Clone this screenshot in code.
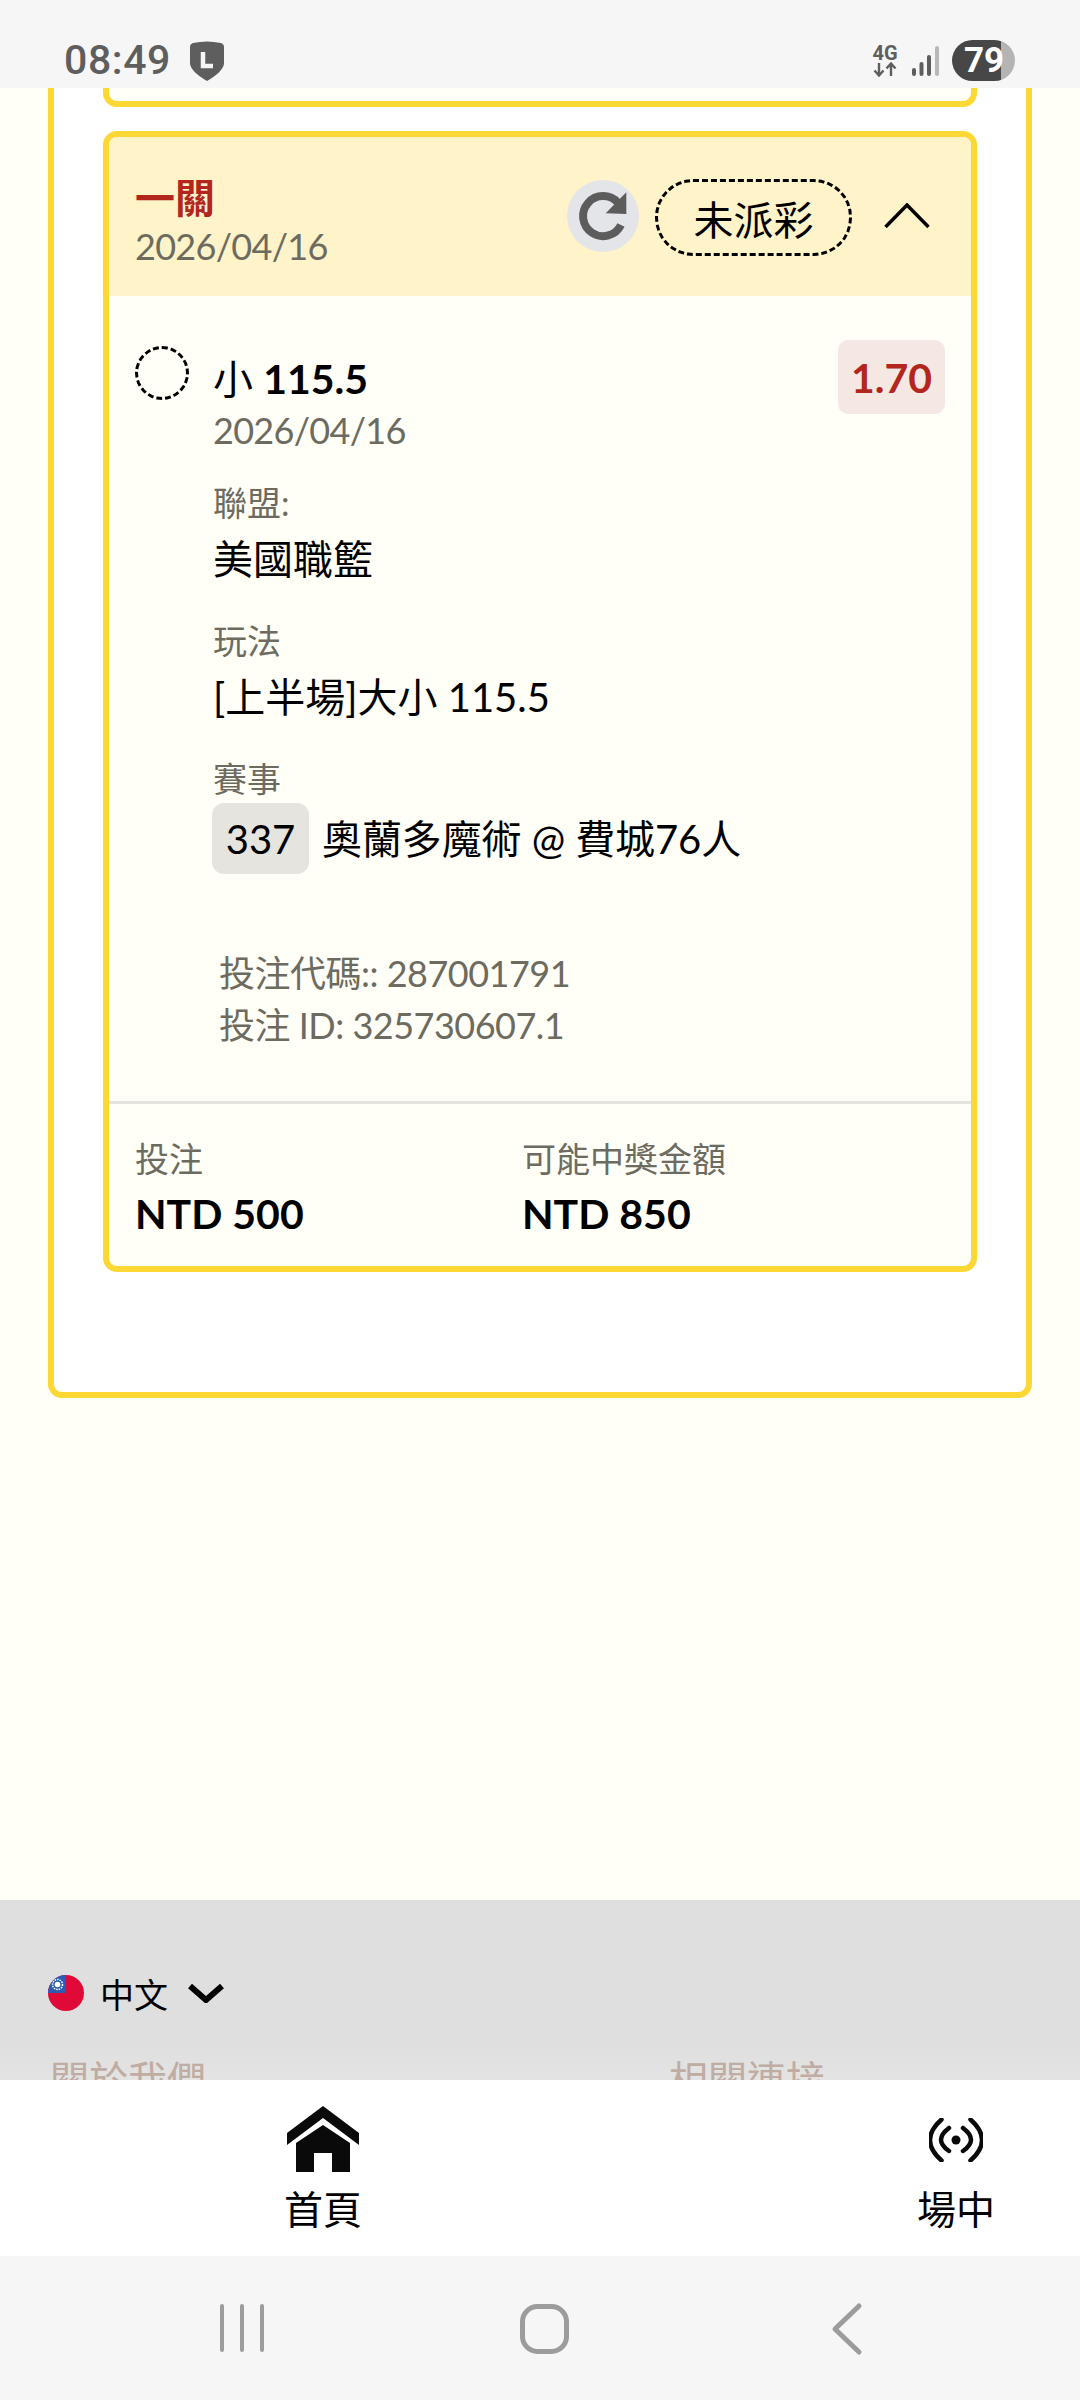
<div class="phone">
  <header class="status">
    <span class="time">08:49</span>
    <svg class="shield" viewBox="0 0 34 40"><path d="M3 2 Q17 -1 31 2 Q34 3 34 6 V22 Q34 30 17 40 Q0 30 0 22 V6 Q0 3 3 2Z" fill="#5e5e5e"/><path d="M13 11 V25 H23" fill="none" stroke="#f5f5f5" stroke-width="4.5"/></svg>
    <span class="spacer"></span>
    <div class="net">
      <span class="g4">4G</span>
      <svg viewBox="0 0 26 15" class="arrows"><path d="M7 1V13M2.5 8.5L7 13.5L11.500 8.500M19 14V2M14.500 6.500L19 1.500L23.500 6.500" fill="none" stroke="#5e5e5e" stroke-width="2.400"/></svg>
    </div>
    <svg class="signal" viewBox="0 0 28 30"><g stroke-width="4" stroke-linecap="round"><path d="M2 24V28M9.500 18V28M17 11V28" stroke="#5e5e5e"/><path d="M25 2V28" stroke="#b8b8b8"/></g></svg>
    <div class="battery"><span class="level">79</span></div>
  </header>

  <main class="page">
    <section class="ticket">
      <div class="prev"></div>
      <article class="bet">
        <div class="bet-head">
          <div class="head-text">
            <div class="title">一關</div>
            <div class="date">2026/04/16</div>
          </div>
          <div class="refresh">
            <svg viewBox="0 0 72 72"><path d="M51 22.800A20 20 0 1 0 54 45" fill="none" stroke="#5c5c5c" stroke-width="8"/><path d="M59.300 12.300V34L38.700 33.300Z" fill="#5c5c5c"/></svg>
          </div>
          <div class="state">未派彩</div>
          <svg class="chev" viewBox="0 0 46 25"><path d="M1.500 24L23 2L44.500 24" fill="none" stroke="#000" stroke-width="3.500"/></svg>
        </div>

        <div class="bet-body">
          <div class="pick">
            <span class="ring"></span>
            <div class="pick-main">
              <div class="pick-name">小 <b>115.5</b></div>
              <div class="date">2026/04/16</div>
            </div>
            <span class="odds">1.70</span>
          </div>
          <dl class="facts">
            <dt>聯盟:</dt>
            <dd>美國職籃</dd>
            <dt>玩法</dt>
            <dd>[上半場]大小 115.5</dd>
            <dt>賽事</dt>
            <dd class="match"><span class="chip">337</span><span>奧蘭多魔術 @ 費城76人</span></dd>
          </dl>
          <div class="ids">
            <div>投注代碼:: 287001791</div>
            <div>投注 ID: 325730607.1</div>
          </div>
        </div>

        <div class="totals">
          <div class="col">
            <div class="lbl">投注</div>
            <div class="amt">NTD 500</div>
          </div>
          <div class="col">
            <div class="lbl">可能中獎金額</div>
            <div class="amt">NTD 850</div>
          </div>
        </div>
      </article>
    </section>
  </main>

  <footer class="foot">
    <div class="lang">
      <svg class="flag" viewBox="0 0 36 36"><defs><clipPath id="fc"><circle cx="18" cy="18" r="18"/></clipPath></defs><g clip-path="url(#fc)"><rect width="36" height="36" fill="#df0a37"/><rect width="18" height="18" fill="#2b5bb5"/><circle cx="9.500" cy="9.500" r="5" fill="none" stroke="#fff" stroke-width="1.500" stroke-dasharray="1.500 1"/><circle cx="9.500" cy="9.500" r="2.800" fill="#fff"/></g></svg>
      <span class="lang-name">中文</span>
      <svg class="lang-chev" viewBox="0 0 36 20"><path d="M2 3L18 17L34 3" fill="none" stroke="#000" stroke-width="6"/></svg>
    </div>
    <div class="foot-links">
      <span>關於我們</span>
      <span>相關連接</span>
    </div>
  </footer>

  <nav class="tabs">
    <div class="tab home">
      <svg class="home-ic" viewBox="0 0 72 66"><path d="M36 0L72 27V39L36 12L0 39V27Z" fill="#0a0a0a"/><path d="M36 19L63 37V66H45V47H27V66H9V37Z" fill="#0a0a0a"/></svg>
      <span>首頁</span>
    </div>
    <div class="tab live">
      <svg class="live-ic" viewBox="0 0 54 44"><circle cx="27" cy="22" r="4.500" fill="#0a0a0a"/><g fill="none" stroke="#0a0a0a" stroke-width="4.500" stroke-linecap="round"><path d="M20 10Q4 22 20 33M34 10Q50 22 34 33M12.500 1.500Q-10.500 22 12.500 42.500M41.500 1.500Q64.500 22 41.500 42.500"/></g></svg>
      <span>場中</span>
    </div>
  </nav>

  <div class="sysnav">
    <svg class="sys" viewBox="0 0 1080 144"><g fill="none" stroke="#9c9c9c"><path d="M222 50V94M242 50V94M262 50V94" stroke-width="4" stroke-linecap="round"/><rect x="522.500" y="50.500" width="44" height="45" rx="15" stroke-width="5"/><path d="M859 50L835 73L859 96" stroke-width="5" stroke-linecap="round" stroke-linejoin="round"/></g></svg>
  </div>
</div>

<style>
  :global(body) { margin: 0; }
  .phone {
    width: 1080px;
    height: 2400px;
    display: flex;
    flex-direction: column;
    overflow: hidden;
    font-family: Lato, "Noto Sans CJK TC", sans-serif;
    color: #000;
    background: #fffef7;
  }
  .status {
    height: 88px;
    flex: none;
    box-sizing: border-box;
    background: #f6f6f6;
    display: flex;
    align-items: center;
    padding: 32px 65px 0 64px;
    color: #5e5e5e;
  }
  .time { font: 500 41px/1 Roboto, sans-serif; letter-spacing: 0.6px; }
  .shield { width: 34px; height: 40px; margin-left: 19px; margin-top: 2px; }
  .spacer { flex: 1; }
  .net { display: flex; flex-direction: column; align-items: center; width: 26px; margin-top: 1px; }
  .g4 { font: 700 20px/18px Roboto, sans-serif; }
  .arrows { width: 26px; height: 15px; }
  .signal { width: 28px; height: 30px; margin-left: 14px; margin-top: 2px; }
  .battery {
    width: 63px;
    height: 41px;
    margin-left: 12px;
    border-radius: 21px;
    background: linear-gradient(90deg, #474747 0 49px, #b4b4b4 49px);
    display: flex;
    align-items: center;
  }
  .level { font: 700 35px/1 Roboto, sans-serif; color: #fff; margin-left: 12px; }

  .page { flex: 1; min-height: 0; }
  .ticket {
    margin: 0 48px;
    padding: 0 49px 120px;
    background: #fff;
    border: 6px solid #fdd835;
    border-top: 0;
    border-radius: 0 0 14px 14px;
  }
  .prev {
    height: 13px;
    background: #fffef7;
    border: 6px solid #fdd835;
    border-top: 0;
    border-radius: 0 0 14px 14px;
    margin-bottom: 24px;
  }
  .bet {
    border: 6px solid #fdd835;
    border-radius: 14px;
    background: #fffef7;
    overflow: hidden;
  }
  .bet-head {
    height: 159px;
    box-sizing: border-box;
    padding: 0 26px;
    background: #fff3c9;
    display: flex;
    align-items: center;
  }
  .head-text { flex: 1; margin-top: 8px; }
  .title { font-size: 40px; line-height: 50px; font-weight: 700; color: #b3261e; }
  .date { font-size: 36px; line-height: 46px; color: #6d6b60; letter-spacing: -0.7px; }
  .refresh {
    width: 72px;
    height: 72px;
    border-radius: 50%;
    background: #e3e5e9;
    margin-right: 16px;
    margin-top: -2px;
  }
  .refresh svg { display: block; width: 72px; height: 72px; }
  .state {
    width: 197px;
    height: 77px;
    box-sizing: border-box;
    border: 3px dashed #000;
    border-radius: 38px;
    font-size: 40px;
    display: flex;
    align-items: center;
    justify-content: center;
    margin-right: 32px;
    margin-top: 2px;
  }
  .chev { width: 46px; height: 25px; margin-right: 15px; margin-top: -2px; }

  .bet-body { height: 808px; box-sizing: border-box; padding: 44px 26px 0; border-bottom: 3px solid #e6e4de; }
  .pick { display: flex; align-items: flex-start; }
  .ring {
    width: 54px;
    height: 54px;
    box-sizing: border-box;
    border: 3px dashed #000;
    border-radius: 50%;
    margin: 6px 24px 0 0;
    flex: none;
  }
  .pick-main { flex: 1; }
  .pick-name { font-size: 40px; line-height: 54px; margin-top: 12px; }
  .pick-name b { font-weight: 700; font-size: 41px; }
  .pick-main .date { margin-top: 1px; }
  .odds {
    width: 107px;
    height: 74px;
    border-radius: 10px;
    background: #f5e8e3;
    color: #b3261e;
    font-size: 41px;
    font-weight: 700;
    display: flex;
    align-items: center;
    justify-content: center;
  }
  .facts { margin: 27px 0 0 78px; }
  dt { font-size: 34px; line-height: 46px; color: #6d6b60; }
  dd { margin: 5px 0 31px; font-size: 40px; line-height: 56px; }
  dd.match { margin: 1px 0 0 -1px; display: flex; align-items: center; gap: 13px; letter-spacing: -0.1px; }
  .chip {
    width: 97px;
    height: 71px;
    border-radius: 12px;
    background: #e5e4df;
    display: flex;
    align-items: center;
    justify-content: center;
  }
  .ids { margin: 73px 0 0 84px; font-size: 36px; line-height: 52px; color: #6d6b60; letter-spacing: -0.5px; }

  .totals { display: flex; padding: 32px 26px 0; height: 162px; box-sizing: border-box; }
  .col { width: 387px; }
  .lbl { font-size: 34px; line-height: 46px; color: #6d6b60; }
  .amt { font-size: 41px; line-height: 54px; font-weight: 700; margin-top: 5px; }

  .foot {
    height: 180px;
    flex: none;
    box-sizing: border-box;
    background: linear-gradient(#dfdfdf 140px, #e3e3e3);
    padding: 75px 48px 0;
    overflow: hidden;
  }
  .lang { display: flex; align-items: center; height: 36px; }
  .flag { width: 36px; height: 36px; }
  .lang-name { font-size: 34px; margin-left: 16px; }
  .lang-chev { width: 36px; height: 20px; margin-left: 20px; }
  .foot-links {
    display: flex;
    margin-top: 40px;
    font-size: 39px;
    line-height: 56px;
    color: #bfaca2;
  }
  .foot-links span { flex: none; width: 617px; padding-left: 2px; }

  .tabs { height: 176px; flex: none; background: #fff; position: relative; }
  .tab { position: absolute; top: 0; display: flex; flex-direction: column; align-items: center; width: 120px; height: 176px; }
  .tab span { font-size: 39px; line-height: 44px; position: absolute; top: 107px; }
  .home { left: 263px; }
  .live { left: 896px; }
  .home-ic { width: 72px; height: 66px; margin-top: 26px; }
  .live-ic { width: 54px; height: 44px; margin-top: 38px; }

  .sysnav { height: 144px; flex: none; background: #f6f6f6; }
  .sys { display: block; width: 1080px; height: 144px; }
</style>
